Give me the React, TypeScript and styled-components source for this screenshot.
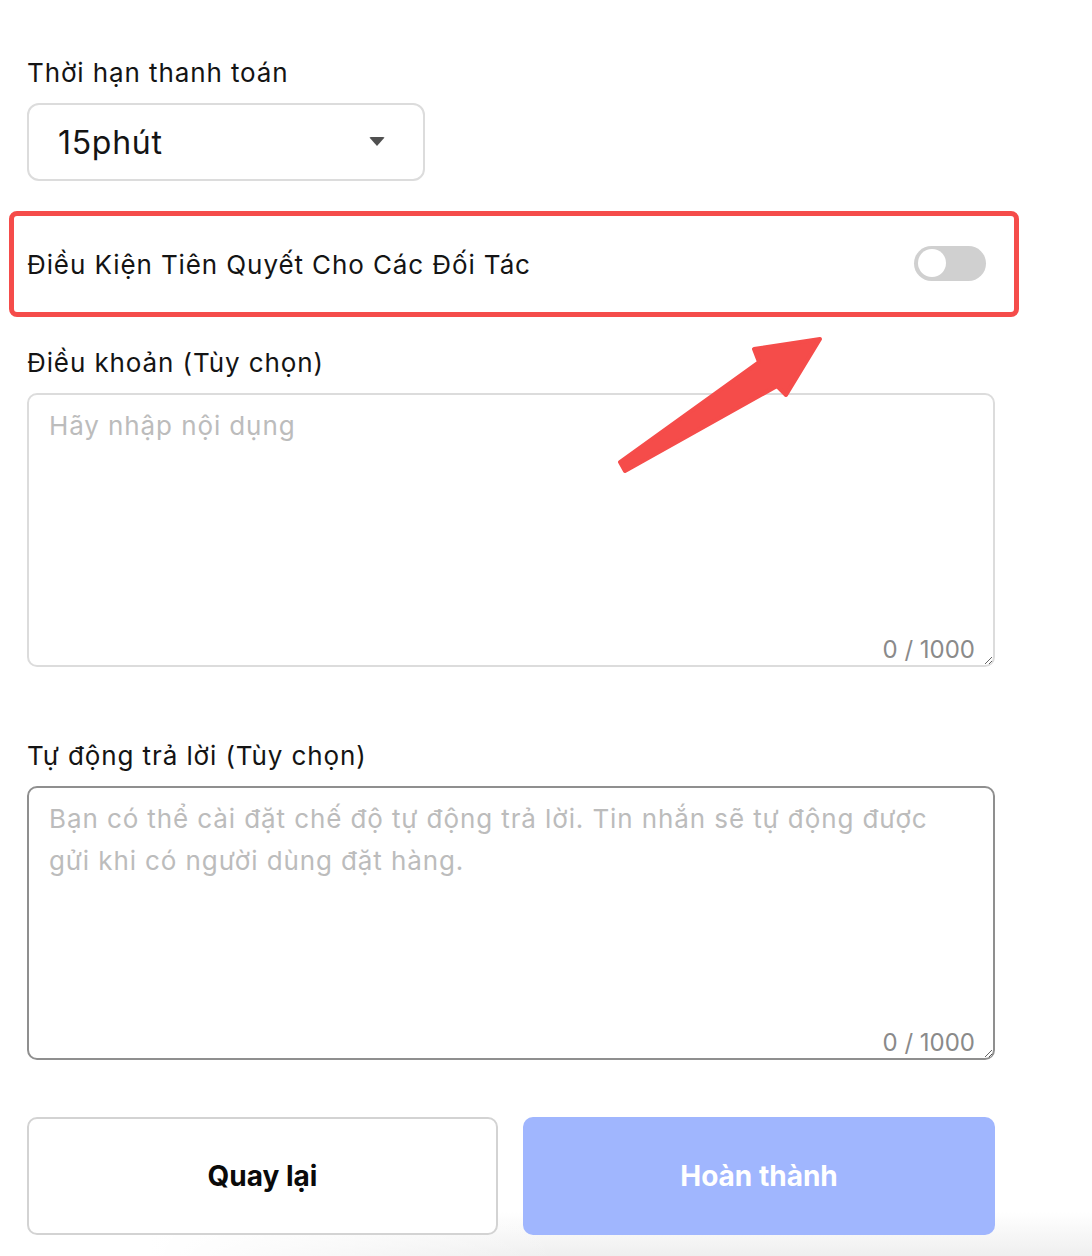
import React from "react";
import styled, { createGlobalStyle } from "styled-components";

const GlobalStyle = createGlobalStyle`
  html, body { margin: 0; padding: 0; background: #ffffff; }
  body { font-family: Inter, "Noto Sans", "Liberation Sans", sans-serif; color: #141414; }
  * { box-sizing: border-box; }
`;

const Page = styled.div`
  position: relative;
  min-height: 1256px;
  padding: 55px 0 0 27px;
  background:
    linear-gradient(to right, #ffffff 0px, #ffffff 150px, rgba(255,255,255,0) 560px),
    linear-gradient(to bottom, rgba(255,255,255,0) 1212px, rgba(238,238,238,0.95) 1256px);
  background-color: #fff;
  overflow: hidden;
`;

const Form = styled.div`
  width: 968px;
  display: flex;
  flex-direction: column;
`;

const Label = styled.div<{ $gapTop?: number }>`
  font-size: 26px;
  line-height: 36px;
  color: #141414;
  margin-top: ${(p) => p.$gapTop ?? 0}px;
  margin-bottom: 12px;
  letter-spacing: 0.9px;
`;

const Select = styled.div`
  width: 398px;
  height: 78px;
  border: 2px solid #dcdcdc;
  border-radius: 12px;
  display: flex;
  align-items: center;
  justify-content: space-between;
  padding: 0 38px 0 29px;
  font-size: 32px;
  letter-spacing: 0.7px;
  color: #141414;
`;

const Caret = styled.span`
  width: 0;
  height: 0;
  border-left: 8px solid transparent;
  border-right: 8px solid transparent;
  border-top: 9px solid #505050;
  border-radius: 2px;
  margin-top: -2px;
`;

const SwitchRow = styled.div`
  position: relative;
  margin-top: 30px;
  height: 106px;
  display: flex;
  align-items: center;
  justify-content: space-between;
  padding-right: 9px;
  font-size: 26px;
  letter-spacing: 0.9px;
  color: #141414;
`;

const Highlight = styled.div`
  position: absolute;
  top: 0;
  bottom: 0;
  left: -18px;
  right: -24px;
  border: 5px solid #f54c4a;
  border-radius: 8px;
  pointer-events: none;
`;

const Toggle = styled.span`
  width: 72px;
  height: 35px;
  border-radius: 18px;
  background: #d0d0d0;
  display: flex;
  align-items: center;
  padding-left: 4px;
  margin-top: -2px;
`;

const Knob = styled.span`
  width: 28px;
  height: 28px;
  border-radius: 50%;
  background: #ffffff;
`;

const AreaWrap = styled.div`
  position: relative;
  width: 968px;
  height: 274px;
`;

const TextArea = styled.textarea<{ $active?: boolean }>`
  display: block;
  width: 100%;
  height: 100%;
  margin: 0;
  border: 2px solid ${(p) => (p.$active ? "#8f8f8f" : "#dcdcdc")};
  border-radius: 10px;
  padding: 10px 20px;
  font-family: Inter, "Noto Sans", "Liberation Sans", sans-serif;
  font-size: 26px;
  line-height: 42px;
  letter-spacing: 0.9px;
  color: #141414;
  outline: none;
  resize: both;
  background: transparent;
  &::placeholder { color: #bcbcbc; }
`;

const Count = styled.span`
  position: absolute;
  right: 20px;
  bottom: 2px;
  font-size: 24px;
  line-height: 30px;
  color: #8a8a8a;
  pointer-events: none;
`;

const Buttons = styled.div`
  margin-top: 57px;
  display: grid;
  grid-template-columns: 471px 472px;
  gap: 25px;
`;

const Button = styled.button<{ $primary?: boolean }>`
  height: 118px;
  border-radius: 10px;
  border: ${(p) => (p.$primary ? "none" : "2px solid #d3d3d3")};
  background: ${(p) => (p.$primary ? "#a0b6fe" : "#ffffff")};
  color: ${(p) => (p.$primary ? "#ffffff" : "#0a0a0a")};
  font-family: Inter, "Noto Sans", "Liberation Sans", sans-serif;
  font-size: 28px;
  font-weight: 700;
  padding: 0;
`;

const ArrowLayer = styled.svg`
  position: absolute;
  left: 0;
  top: 0;
  width: 1092px;
  height: 1256px;
  pointer-events: none;
`;

export default function App() {
  return (
    <>
      <GlobalStyle />
      <Page>
        <Form>
          <Label>Thời hạn thanh toán</Label>
          <Select>
            <span>15phút</span>
            <Caret />
          </Select>
          <SwitchRow>
            <span>Điều Kiện Tiên Quyết Cho Các Đối Tác</span>
            <Toggle>
              <Knob />
            </Toggle>
            <Highlight />
          </SwitchRow>
          <Label $gapTop={28}>Điều khoản (Tùy chọn)</Label>
          <AreaWrap>
            <TextArea placeholder="Hãy nhập nội dụng" />
            <Count>0 / 1000</Count>
          </AreaWrap>
          <Label $gapTop={71}>Tự động trả lời (Tùy chọn)</Label>
          <AreaWrap>
            <TextArea
              $active
              placeholder="Bạn có thể cài đặt chế độ tự động trả lời. Tin nhắn sẽ tự động được gửi khi có người dùng đặt hàng."
            />
            <Count>0 / 1000</Count>
          </AreaWrap>
          <Buttons>
            <Button>Quay lại</Button>
            <Button $primary>Hoàn thành</Button>
          </Buttons>
        </Form>
        <ArrowLayer viewBox="0 0 1092 1256">
          <polygon
            points="620,462 759,362 754,349 820,339 786,395 777,386 625,471"
            fill="#f54c4a"
            stroke="#f54c4a"
            strokeWidth="4"
            strokeLinejoin="round"
          />
        </ArrowLayer>
      </Page>
    </>
  );
}
